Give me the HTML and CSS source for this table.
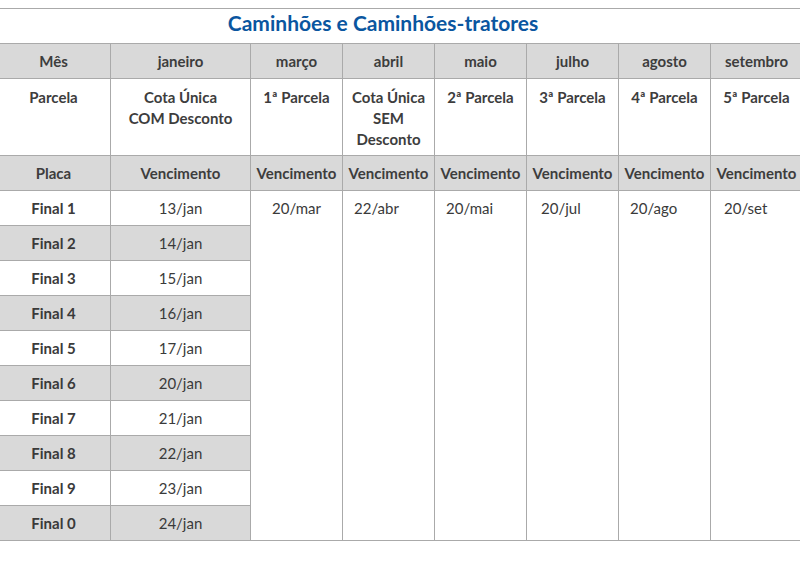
FILE: index.html
```html
<!DOCTYPE html>
<html lang="pt">
<head>
<meta charset="utf-8">
<link rel="stylesheet" href="styles.css">
</head>
<body>
<div class="wrap">
<table class="tbl">
  <colgroup>
    <col class="c1"><col class="c2"><col class="c3"><col class="c3"><col class="c3"><col class="c3"><col class="c3"><col class="c3">
  </colgroup>
  <tr><td class="title" colspan="8">Caminhões e Caminhões-tratores</td></tr>
  <tr class="gray head">
    <td class="first">Mês</td><td>janeiro</td><td>março</td><td>abril</td><td>maio</td><td>julho</td><td>agosto</td><td>setembro</td>
  </tr>
  <tr class="head tall">
    <td class="first">Parcela</td><td>Cota Única<br>COM Desconto</td><td>1ª Parcela</td><td>Cota Única<br>SEM<br>Desconto</td><td>2ª Parcela</td><td>3ª Parcela</td><td>4ª Parcela</td><td>5ª Parcela</td>
  </tr>
  <tr class="gray head">
    <td class="first">Placa</td><td>Vencimento</td><td>Vencimento</td><td>Vencimento</td><td>Vencimento</td><td>Vencimento</td><td>Vencimento</td><td>Vencimento</td>
  </tr>
  <tr>
    <td class="plate first">Final 1</td><td>13/jan</td>
    <td rowspan="10" class="due center">20/mar</td>
    <td rowspan="10" class="due">22/abr</td>
    <td rowspan="10" class="due">20/mai</td>
    <td rowspan="10" class="due pl14">20/jul</td>
    <td rowspan="10" class="due">20/ago</td>
    <td rowspan="10" class="due pl13">20/set</td>
  </tr>
  <tr class="gray"><td class="plate first">Final 2</td><td>14/jan</td></tr>
  <tr><td class="plate first">Final 3</td><td>15/jan</td></tr>
  <tr class="gray"><td class="plate first">Final 4</td><td>16/jan</td></tr>
  <tr><td class="plate first">Final 5</td><td>17/jan</td></tr>
  <tr class="gray"><td class="plate first">Final 6</td><td>20/jan</td></tr>
  <tr><td class="plate first">Final 7</td><td>21/jan</td></tr>
  <tr class="gray"><td class="plate first">Final 8</td><td>22/jan</td></tr>
  <tr><td class="plate first">Final 9</td><td>23/jan</td></tr>
  <tr class="gray"><td class="plate first">Final 0</td><td>24/jan</td></tr>
</table>
</div>
</body>
</html>
```

FILE: styles.css
```css
html, body {
  margin: 0;
  padding: 0;
  background: #fff;
}
body {
  font-family: Lato, "Open Sans", sans-serif;
  color: #3a3a3a;
  overflow: hidden;
}
.wrap {
  padding-top: 8px;
  width: 800px;
  overflow: hidden;
}
.tbl {
  border-collapse: collapse;
  table-layout: fixed;
  width: 802px;
  margin-left: -1px;
  font-size: 15px;
  line-height: 21px;
}
.c1 { width: 111px; }
.c2 { width: 140px; }
.c3 { width: 92px; }
.tbl td {
  border: 1px solid #aaaaaa;
  padding: 7px 2px 6px;
  text-align: center;
  vertical-align: top;
  white-space: nowrap;
}
.tbl td.first {
  padding-right: 5px;
}
.tbl td.title {
  border-left: none;
  border-right: none;
  color: #0a56a0;
  font-weight: 700;
  font-size: 21px;
  line-height: 26px;
  padding: 1px 36px 7px 0;
}
.gray td {
  background: #d9d9d9;
}
.head td {
  font-weight: 700;
  color: #3d3d3d;
}
.tall td {
  padding-top: 8px;
  padding-bottom: 5px;
}
.plate {
  font-weight: 700;
}
.tbl td.due {
  background: #fff;
  text-align: left;
  padding-left: 11px;
}
.tbl td.due.center {
  text-align: center;
  padding-left: 2px;
}
.tbl td.due.pl14 { padding-left: 14px; }
.tbl td.due.pl13 { padding-left: 13px; }
```
